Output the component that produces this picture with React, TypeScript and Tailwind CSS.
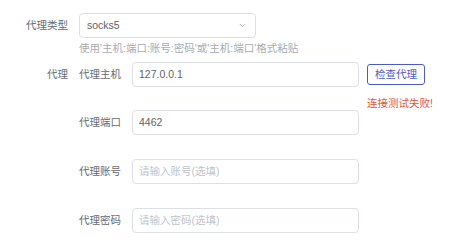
const font = { fontFamily: '"Liberation Sans", "Noto Sans CJK SC", sans-serif' };

function Field({ value, placeholder }: { value?: string; placeholder?: string }) {
  return (
    <div className="flex h-[25px] w-[227px] items-center rounded-[4px] border border-[#dcdfe6] bg-white pl-[6px] text-[10.5px]">
      {value ? (
        <span className="text-[#606266]">{value}</span>
      ) : (
        <span className="text-[#c0c4cc]">{placeholder}</span>
      )}
    </div>
  );
}

const rows = [
  { label: "代理端口", value: "4462" },
  { label: "代理账号", placeholder: "请输入账号(选填)" },
  { label: "代理密码", placeholder: "请输入密码(选填)" },
];

export default function App() {
  return (
    <div className="h-[248px] w-[458px] bg-white text-[10.5px] text-[#666a70]" style={font}>
      <div className="flex pt-[13px]">
        <div className="flex h-[25px] w-[79px] items-center justify-end pr-[11px]">代理类型</div>
        <div className="flex flex-col">
          <div className="flex h-[25px] w-[177px] items-center justify-between rounded-[4px] border border-[#dcdfe6] pl-[7px] pr-[9px]">
            <span className="text-[#606266]">socks5</span>
            <svg width="7" height="5" viewBox="0 0 7 5" fill="none">
              <path d="M0.8 1 L3.5 3.8 L6.2 1" stroke="#a8abb2" strokeWidth="0.9" />
            </svg>
          </div>
          <div className="mt-[3px] leading-[14px] text-[#a8abb2]">
            使用'主机:端口:账号:密码'或'主机:端口'格式粘贴
          </div>
        </div>
      </div>

      <div className="mt-[7px] flex">
        <div className="flex h-[25px] w-[79px] items-center justify-end pr-[11px]">代理</div>
        <div className="flex flex-col">
          <div className="flex h-[25px] items-center">
            <div className="w-[53px]">代理主机</div>
            <Field value="127.0.0.1" />
            <div className="relative ml-[8px]">
              <button className="flex h-[21px] w-[58px] items-center justify-center rounded-[3px] border-[1.5px] border-[#4a5bc9] text-[10.5px] text-[#4a5bc9]">
                检查代理
              </button>
              <div className="absolute left-0 top-[32px] whitespace-nowrap text-[10.5px] leading-[14px] text-[#e4572e]">
                连接测试失败!
              </div>
            </div>
          </div>
          {rows.map((r, i) => (
            <div key={r.label} className={`flex h-[25px] items-center ${i === 0 ? "mt-[23px]" : "mt-[24px]"}`}>
              <div className="w-[53px]">{r.label}</div>
              <Field value={r.value} placeholder={r.placeholder} />
            </div>
          ))}
        </div>
      </div>
    </div>
  );
}
